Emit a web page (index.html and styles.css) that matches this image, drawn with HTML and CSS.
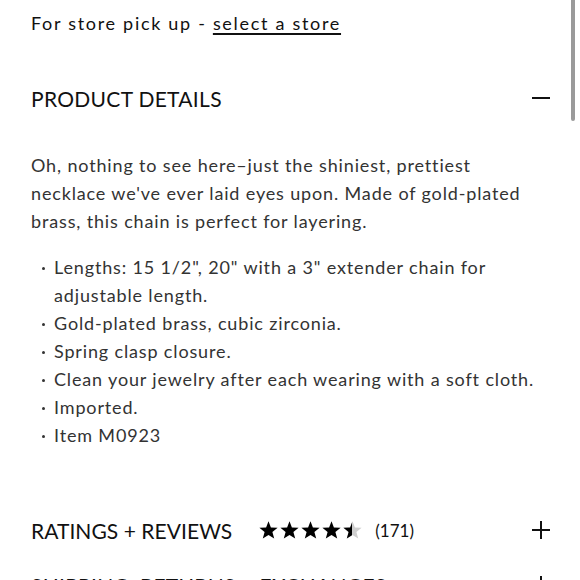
FILE: index.html
```html
<!DOCTYPE html>
<html>
<head>
<meta charset="utf-8">
<link rel="stylesheet" href="styles.css">
</head>
<body>
<div class="page">
  <p class="pickup">For store pick up - <a class="store-link" href="#">select a store</a></p>

  <section class="acc">
    <div class="acc-head">
      <h2 class="acc-title">PRODUCT DETAILS</h2>
      <span class="icon minus"></span>
    </div>
    <div class="acc-body">
      <p class="desc">Oh, nothing to see here–just the shiniest, prettiest necklace we've ever laid eyes upon. Made of gold-plated brass, this chain is perfect for layering.</p>
      <ul class="bullets">
        <li>Lengths: 15 1/2", 20" with a 3" extender chain for adjustable length.</li>
        <li>Gold-plated brass, cubic zirconia.</li>
        <li>Spring clasp closure.</li>
        <li>Clean your jewelry after each wearing with a soft cloth.</li>
        <li>Imported.</li>
        <li>Item M0923</li>
      </ul>
    </div>
  </section>

  <section class="acc ratings">
    <div class="acc-head">
      <div class="head-left">
        <h2 class="acc-title">RATINGS + REVIEWS</h2>
        <span class="stars">
          <svg width="104" height="19" viewBox="0 0 104 19">
            <defs>
              <path id="st" d="M9.5 0.3 L11.9 6.5 L18.6 6.8 L13.4 11 L15.2 17.6 L9.5 13.9 L3.8 17.6 L5.6 11 L0.4 6.8 L7.1 6.5 Z"/>
              <clipPath id="half"><rect x="0" y="0" width="9" height="19"/></clipPath>
            </defs>
            <use href="#st" x="0" fill="#000"/>
            <use href="#st" x="21" fill="#000"/>
            <use href="#st" x="42" fill="#000"/>
            <use href="#st" x="63" fill="#000"/>
            <g transform="translate(84 0)">
              <use href="#st" fill="#cfcfcf"/>
              <use href="#st" fill="#000" clip-path="url(#half)"/>
            </g>
          </svg>
        </span>
        <span class="count">(171)</span>
      </div>
      <span class="icon plus"></span>
    </div>
  </section>

  <section class="acc shipping">
    <div class="acc-head">
      <h2 class="acc-title">SHIPPING, RETURNS + EXCHANGES</h2>
      <span class="icon plus"></span>
    </div>
  </section>
</div>
<div class="scroll-thumb"></div>
</body>
</html>
```

FILE: styles.css
```css
html, body {
  margin: 0;
  padding: 0;
  background: #fff;
  overflow: hidden;
}
body {
  font-family: "Lato", "Liberation Sans", sans-serif;
  color: #222;
  width: 580px;
  height: 580px;
  position: relative;
}
.page {
  padding: 0 30px 0 31px;
}
.pickup {
  margin: 9px 0 0;
  font-size: 18px;
  line-height: 28px;
  letter-spacing: 1.7px;
  color: #111;
}
.store-link {
  color: #111;
  text-decoration: underline;
  text-underline-offset: 3px;
  text-decoration-thickness: 1.5px;
}
.acc-head {
  display: flex;
  align-items: center;
  justify-content: space-between;
  height: 48px;
}
.acc:first-of-type .acc-head {
  margin-top: 37px;
}
.acc-title {
  margin: 0;
  font-family: "Lato", "Liberation Sans", sans-serif;
  font-weight: 400;
  font-size: 21px;
  letter-spacing: 0.3px;
  color: #111;
}
.acc-body {
  padding-top: 29px;
}
.desc {
  margin: 0;
  font-size: 18px;
  line-height: 28px;
  letter-spacing: 0.85px;
  color: #333;
}
.bullets {
  margin: 18px 0 0;
  padding: 0;
  list-style: none;
  font-size: 18px;
  line-height: 28px;
  letter-spacing: 0.85px;
  color: #333;
}
.bullets li {
  position: relative;
  padding-left: 23px;
}
.bullets li::before {
  content: "";
  position: absolute;
  left: 11px;
  top: 14px;
  width: 3px;
  height: 3px;
  border-radius: 50%;
  background: #333;
}
.ratings {
  margin-top: 57px;
}
.ratings .acc-title {
  letter-spacing: 0.05px;
}
.head-left {
  display: flex;
  align-items: center;
}
.stars {
  display: inline-flex;
  margin-left: 27px;
}
.stars svg {
  display: block;
}
.count {
  margin-left: 12px;
  font-size: 17px;
  letter-spacing: 0;
  color: #111;
}
.shipping {
  margin-top: 7px;
}
.icon {
  position: relative;
  width: 18px;
  height: 18px;
  flex: none;
}
.icon::before,
.icon::after {
  content: "";
  position: absolute;
  background: #111;
}
.icon::before {
  left: 0;
  top: 8px;
  width: 18px;
  height: 2px;
}
.minus::after {
  display: none;
}
.plus::after {
  left: 8px;
  top: 0;
  width: 2px;
  height: 18px;
}
.scroll-thumb {
  position: absolute;
  right: 5px;
  top: 0;
  width: 4px;
  height: 121px;
  background: #9a9a9a;
  border-radius: 0 0 2px 2px;
}
```
